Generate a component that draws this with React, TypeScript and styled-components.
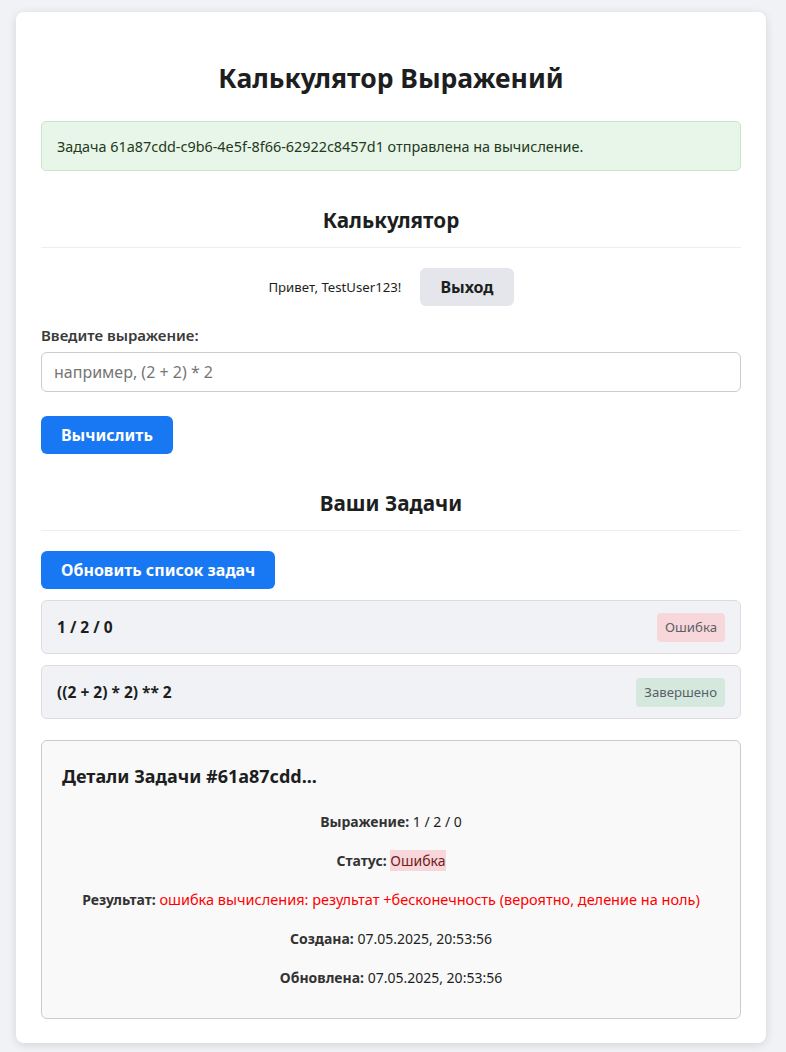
import React from "react";
import styled, { createGlobalStyle } from "styled-components";

const GlobalStyle = createGlobalStyle`
  body {
    margin: 0;
    background: #f0f2f5;
    font-family: "Noto Sans", "Open Sans", sans-serif;
    color: #1c1e21;
  }
`;

const Page = styled.div`
  padding: 12px 0 10px 16px;
`;

const Card = styled.div`
  width: 750px;
  box-sizing: border-box;
  background: #fff;
  border-radius: 8px;
  box-shadow: 0 2px 10px rgba(0, 0, 0, 0.12);
  padding: 25px 25px 24px;
`;

const Title = styled.h1`
  font-size: 26.5px;
  font-weight: 700;
  text-align: center;
  margin: 22px 0 24px;
  line-height: 38px;
`;

const Alert = styled.div`
  background: #e8f5e9;
  border: 1px solid #c8e6c9;
  border-radius: 5px;
  color: #1e3a20;
  font-size: 14.4px;
  padding: 15px 15px 14px;
  line-height: 19px;
`;

const SectionTitle = styled.h2`
  font-size: 20.7px;
  font-weight: 700;
  text-align: center;
  margin: 36px 0 20px;
  line-height: 27px;
  padding-bottom: 13px;
  border-bottom: 1px solid #eee;
`;

const UserBar = styled.div`
  display: flex;
  justify-content: center;
  align-items: center;
  gap: 19px;
  font-size: 13.2px;
`;

const Button = styled.button<{ $variant?: "primary" | "secondary" }>`
  font-family: inherit;
  font-size: 16px;
  font-weight: 700;
  height: 38px;
  padding: 0 20px;
  border: none;
  border-radius: 6px;
  cursor: pointer;
  background: ${(p) => (p.$variant === "secondary" ? "#e4e6eb" : "#1877f2")};
  color: ${(p) => (p.$variant === "secondary" ? "#1c1e21" : "#fff")};
`;

const Field = styled.div`
  margin-top: 19px;
  display: flex;
  flex-direction: column;
  align-items: flex-start;
`;

const Label = styled.label`
  font-size: 15px;
  font-weight: 600;
  color: #3a3a3a;
  line-height: 20px;
  margin-bottom: 7px;
`;

const Input = styled.input`
  width: 100%;
  height: 40px;
  box-sizing: border-box;
  border: 1px solid #ccc;
  border-radius: 6px;
  padding: 0 12px;
  font-family: inherit;
  font-size: 16px;
  &::placeholder {
    color: #757575;
  }
`;

const Actions = styled.div`
  margin-top: 24px;
`;

const TaskList = styled.div`
  margin-top: 11px;
  display: flex;
  flex-direction: column;
  gap: 11px;
`;

const TaskItem = styled.div`
  display: flex;
  justify-content: space-between;
  align-items: center;
  height: 54px;
  box-sizing: border-box;
  padding: 0 15px;
  background: #f0f2f5;
  border: 1px solid #ddd;
  border-radius: 6px;
  font-size: 15.5px;
  font-weight: 700;
`;

const Badge = styled.span<{ $status: "error" | "done" }>`
  font-size: 13.2px;
  line-height: 19px;
  font-weight: 400;
  padding: 5px 8px;
  border-radius: 4px;
  color: #5c5f6a;
  background: ${(p) => (p.$status === "error" ? "#f8d7da" : "#d4e8dd")};
`;

const Details = styled.div`
  margin-top: 21px;
  background: #f9f9f9;
  border: 1px solid #ccc;
  border-radius: 6px;
  padding: 20px 20px 21px;
`;

const DetailsTitle = styled.h3`
  font-size: 18px;
  font-weight: 700;
  margin: 3px 0 24px;
  line-height: 24px;
`;

const Row = styled.p`
  text-align: center;
  font-size: 14px;
  line-height: 19px;
  margin: 0 0 20px;
  color: #1c1e21;
  &:last-child {
    margin-bottom: 10px;
  }
  strong {
    font-weight: 700;
    color: #333;
  }
`;

const StatusMark = styled.span`
  background: #f8d7da;
  color: #721c24;
  padding: 1px 0;
`;

const ErrorText = styled.span`
  color: #ff0000;
  font-size: 14.5px;
`;

export default function App() {
  return (
    <Page>
      <GlobalStyle />
      <Card>
        <Title>Калькулятор Выражений</Title>
        <Alert>
          Задача 61a87cdd-c9b6-4e5f-8f66-62922c8457d1 отправлена на вычисление.
        </Alert>

        <SectionTitle>Калькулятор</SectionTitle>
        <UserBar>
          <span>Привет, TestUser123!</span>
          <Button $variant="secondary">Выход</Button>
        </UserBar>
        <Field>
          <Label htmlFor="expr">Введите выражение:</Label>
          <Input id="expr" placeholder="например, (2 + 2) * 2" />
        </Field>
        <Actions>
          <Button>Вычислить</Button>
        </Actions>

        <SectionTitle>Ваши Задачи</SectionTitle>
        <Button>Обновить список задач</Button>
        <TaskList>
          <TaskItem>
            <span>1 / 2 / 0</span>
            <Badge $status="error">Ошибка</Badge>
          </TaskItem>
          <TaskItem>
            <span>((2 + 2) * 2) ** 2</span>
            <Badge $status="done">Завершено</Badge>
          </TaskItem>
        </TaskList>

        <Details>
          <DetailsTitle>Детали Задачи #61a87cdd...</DetailsTitle>
          <Row>
            <strong>Выражение:</strong> 1 / 2 / 0
          </Row>
          <Row>
            <strong>Статус:</strong> <StatusMark>Ошибка</StatusMark>
          </Row>
          <Row>
            <strong>Результат:</strong>{" "}
            <ErrorText>
              ошибка вычисления: результат +бесконечность (вероятно, деление на ноль)
            </ErrorText>
          </Row>
          <Row>
            <strong>Создана:</strong> 07.05.2025, 20:53:56
          </Row>
          <Row>
            <strong>Обновлена:</strong> 07.05.2025, 20:53:56
          </Row>
        </Details>
      </Card>
    </Page>
  );
}
